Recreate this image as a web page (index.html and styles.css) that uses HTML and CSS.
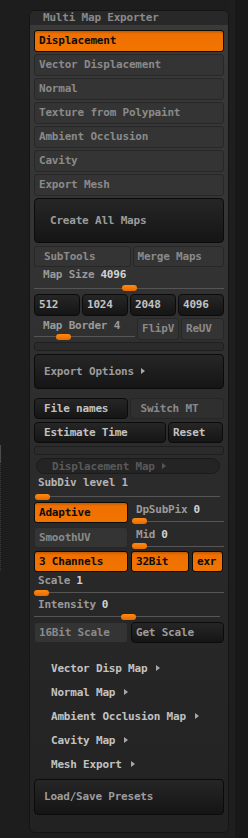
FILE: index.html
```html
<html lang="en">
<head>
    <meta charset="UTF-8">
    <meta name="viewport" content="width=device-width, initial-scale=1.0">
    <title>Multi Map Exporter</title>
    <link rel="stylesheet" href="styles.css">
</head>
<body>
    <div class="gutter">
        <div class="scroll-mark"><div class="scroll-thumb"></div></div>
    </div>

    <div class="panel">
        <div class="panel-head">Multi Map Exporter</div>
        <div class="panel-body">
            <div class="map-list">
                <div class="btn on">Displacement</div>
                <div class="btn off">Vector Displacement</div>
                <div class="btn off">Normal</div>
                <div class="btn off">Texture from Polypaint</div>
                <div class="btn off">Ambient Occlusion</div>
                <div class="btn off">Cavity</div>
                <div class="btn off">Export Mesh</div>
            </div>

            <div class="btn dark create-btn">Create All Maps</div>

            <div class="row row-sub">
                <div class="btn off wide-pad grow">SubTools</div>
                <div class="btn off grow">Merge Maps</div>
            </div>

            <div class="slider slider-size">
                <div class="slider-label">Map Size <b>4096</b></div>
                <div class="track"><span class="knob" style="left: 88px"></span></div>
            </div>

            <div class="row row-sizes">
                <div class="btn dark light grow">512</div>
                <div class="btn dark light grow">1024</div>
                <div class="btn dark light grow">2048</div>
                <div class="btn dark light grow">4096</div>
            </div>

            <div class="row row-border">
                <div class="slider slider-border">
                    <div class="slider-label">Map Border 4</div>
                    <div class="track"><span class="knob" style="left: 22px"></span></div>
                </div>
                <div class="btn off flip-btn">FlipV</div>
                <div class="btn off reuv-btn">ReUV</div>
            </div>

            <div class="empty-bar bar-one"></div>

            <div class="btn dark export-btn">Export Options <span class="arrow"></span></div>

            <div class="row row-files">
                <div class="btn dark light wide-pad grow">File names</div>
                <div class="btn off switch-btn grow">Switch MT</div>
            </div>

            <div class="row row-time">
                <div class="btn dark light wide-pad time-btn">Estimate Time</div>
                <div class="btn dark light reset-btn">Reset</div>
            </div>

            <div class="empty-bar bar-two"></div>

            <div class="sub-pill">Displacement Map <span class="arrow dim"></span></div>

            <div class="slider slider-subdiv">
                <div class="slider-label bright">SubDiv level 1</div>
                <div class="track"><span class="knob" style="left: 0px"></span></div>
            </div>

            <div class="row row-adaptive">
                <div class="btn on half-btn">Adaptive</div>
                <div class="slider side-slider">
                    <div class="slider-label">DpSubPix <b>0</b></div>
                    <div class="track"><span class="knob" style="left: 0px"></span></div>
                </div>
            </div>

            <div class="row row-smooth">
                <div class="btn off half-btn">SmoothUV</div>
                <div class="slider side-slider">
                    <div class="slider-label">Mid <b>0</b></div>
                    <div class="track"><span class="knob" style="left: 0px"></span></div>
                </div>
            </div>

            <div class="row row-channels">
                <div class="btn on half-btn">3 Channels</div>
                <div class="btn on bit-btn">32Bit</div>
                <div class="btn on exr-btn">exr</div>
            </div>

            <div class="slider slider-scale">
                <div class="slider-label">Scale <b>1</b></div>
                <div class="track"><span class="knob" style="left: 0px"></span></div>
            </div>

            <div class="slider slider-intensity">
                <div class="slider-label">Intensity <b>0</b></div>
                <div class="track"><span class="knob" style="left: 87px"></span></div>
            </div>

            <div class="row row-bit">
                <div class="btn off half-btn">16Bit Scale</div>
                <div class="btn dark grow">Get Scale</div>
            </div>

            <div class="sub-list">
                <div class="sub-item">Vector Disp Map <span class="arrow"></span></div>
                <div class="sub-item">Normal Map <span class="arrow"></span></div>
                <div class="sub-item">Ambient Occlusion Map <span class="arrow"></span></div>
                <div class="sub-item">Cavity Map <span class="arrow"></span></div>
                <div class="sub-item">Mesh Export <span class="arrow"></span></div>
            </div>

            <div class="btn dark presets-btn">Load/Save Presets</div>
        </div>
    </div>

    <div class="edge"></div>
</body>
</html>
```

FILE: styles.css
```css
* {
    box-sizing: border-box;
}
body {
    margin: 0;
    height: 838px;
    overflow: hidden;
    display: flex;
    background-color: #1d1d1d;
    font-family: "DejaVu Sans Mono", monospace;
    font-weight: bold;
    font-size: 11px;
    letter-spacing: -0.2px;
    color: #8c8c8c;
}
b {
    color: #d2d2d2;
}

/* left gutter with the small scroll marker */
.gutter {
    width: 29px;
    flex-shrink: 0;
}
.scroll-mark {
    width: 1px;
    height: 126px;
    margin-top: 445px;
    border-left: 1px dotted #3a3a3a;
}
.scroll-thumb {
    width: 1px;
    height: 18px;
    margin-top: 52px;
    margin-left: -1px;
    background-color: #4a4a4a;
}
.edge {
    flex: 1;
    background: linear-gradient(to right, #1e1e1e 6px, #181818 6px);
}

/* panel */
.panel {
    width: 200px;
    height: 823px;
    margin-top: 10px;
    flex-shrink: 0;
    display: flex;
    flex-direction: column;
    border: 1px solid #151515;
    border-radius: 6px;
    background: linear-gradient(#3a3a3a, #333 30%, #2b2b2b 55%, #222);
}
.panel-head {
    height: 14px;
    flex-shrink: 0;
    padding-left: 13px;
    line-height: 14px;
    color: #8a8a8a;
    background-color: #282828;
    border-radius: 5px 5px 0 0;
}
.panel-body {
    flex-shrink: 0;
    display: flex;
    flex-direction: column;
    padding: 0 4px;
}
.panel-body > * {
    flex-shrink: 0;
}

/* buttons */
.btn {
    height: 21px;
    flex-shrink: 0;
    display: flex;
    align-items: center;
    padding: 0 4px 1px;
    border-radius: 3px;
    white-space: nowrap;
}
.btn.on {
    color: #0c0c0c;
    background: linear-gradient(#c45a00, #ef7000 3px, #f27400);
    border: 1px solid #0e0a06;
}
.btn.off {
    color: #8a8a8a;
    background-color: #343434;
    border: 1px solid #272727;
}
.btn.dark {
    color: #9c9c9c;
    background: linear-gradient(#262626, #151515);
    border: 1px solid #0b0b0b;
    border-radius: 4px;
}
.btn.light {
    color: #c2c2c2;
}
.wide-pad {
    padding-left: 9px;
}
.grow {
    flex: 1;
}
.row {
    display: flex;
    gap: 2px;
}

.map-list {
    display: flex;
    flex-direction: column;
    gap: 2px;
    margin-top: 5px;
}
.map-list .btn {
    height: 22px;
}
.create-btn {
    height: 45px;
    margin-top: 2px;
    padding-left: 15px;
}
.row-sub {
    margin-top: 3px;
    height: 21px;
}

/* sliders */
.slider {
    display: flex;
    flex-direction: column;
}
.slider-label {
    display: flex;
    align-items: center;
    gap: 6px;
    flex-shrink: 0;
    padding-left: 9px;
    color: #9a9a9a;
}
.slider-label.bright {
    color: #b4b4b4;
}
.track {
    position: relative;
    flex: 1;
}
.track::before {
    content: "";
    position: absolute;
    left: 0;
    right: 0;
    top: 6px;
    height: 1px;
    background-color: #555;
}
.knob {
    position: absolute;
    top: 3px;
    width: 15px;
    height: 6px;
    border-radius: 3px;
    background: linear-gradient(#ff8a10, #e86a00);
}

.slider-size {
    height: 27px;
}
.slider-size .slider-label {
    height: 15px;
}
.row-sizes {
    height: 22px;
}
.row-sizes .btn {
    height: 22px;
}

.row-border {
    margin-top: 2px;
    height: 22px;
}
.slider-border {
    width: 101px;
}
.slider-border .slider-label {
    height: 14px;
    padding-top: 1px;
}
.slider-border .track::before {
    top: 4px;
}
.slider-border .knob {
    top: 2px;
}
.flip-btn {
    width: 42px;
    height: 22px;
}
.reuv-btn {
    width: 43px;
    height: 22px;
}

.empty-bar {
    height: 9px;
    margin-top: 2px;
    background-color: #2b2b2b;
    border: 1px solid #1f1f1f;
    border-radius: 3px;
}
.bar-two {
    margin-top: 3px;
}
.export-btn {
    height: 35px;
    margin-top: 3px;
    padding-left: 9px;
    color: #b0b0b0;
}
.arrow {
    width: 0;
    height: 0;
    margin-left: 7px;
    border-top: 3px solid transparent;
    border-bottom: 3px solid transparent;
    border-left: 4px solid #a8a8a8;
}
.arrow.dim {
    border-left-color: #555;
}

.row-files {
    margin-top: 9px;
    height: 21px;
}
.switch-btn {
    padding-left: 10px;
    background-color: #2f2f2f !important;
    border-color: #262626 !important;
}
.row-time {
    margin-top: 3px;
    height: 21px;
}
.time-btn {
    width: 132px;
}
.reset-btn {
    width: 55px;
}

.sub-pill {
    height: 16px;
    margin: 3px 4px 0 2px;
    display: flex;
    align-items: center;
    padding-left: 15px;
    color: #595959;
    background-color: #242424;
    border: 1px solid #1b1b1b;
    border-radius: 8px;
}

/* lower section */
.slider-subdiv .slider-label,
.slider-scale .slider-label,
.slider-intensity .slider-label {
    padding-left: 4px;
}
.slider-subdiv {
    height: 27px;
}
.slider-subdiv .slider-label {
    height: 17px;
}
.slider-subdiv .track {
    margin: 0 4px 0 1px;
}
.slider-subdiv .track::before {
    top: 5px;
}

.row-adaptive {
    margin-top: 1px;
    height: 21px;
}
.row-smooth {
    margin-top: 4px;
    height: 21px;
}
.half-btn {
    width: 94px;
}
.side-slider {
    flex: 1;
    margin-left: 2px;
}
.side-slider .slider-label {
    height: 14px;
    padding-left: 4px;
    padding-top: 1px;
}
.side-slider .track::before {
    top: 5px;
}
.side-slider .knob {
    top: 2px;
}

.row-channels {
    margin-top: 3px;
    height: 21px;
    gap: 3px;
}
.bit-btn {
    width: 58px;
}
.exr-btn {
    width: 31px;
}

.slider-scale {
    height: 25px;
}
.slider-scale .slider-label {
    height: 16px;
}
.slider-scale .track::before {
    top: 4px;
}
.slider-scale .knob {
    top: 2px;
}
.slider-intensity {
    height: 24px;
}
.slider-intensity .slider-label {
    height: 14px;
}
.slider-intensity .track {
    margin-right: 4px;
}
.slider-intensity .track::before {
    top: 5px;
}

.row-bit {
    margin-top: 1px;
    height: 21px;
    gap: 3px;
}

.sub-list {
    display: flex;
    flex-direction: column;
    margin-top: 13px;
}
.sub-item {
    height: 24px;
    display: flex;
    align-items: center;
    padding-left: 17px;
    color: #c2c2c2;
}
.sub-item .arrow {
    margin-left: 9px;
}

.presets-btn {
    height: 36px;
    margin-top: 3px;
    padding-left: 9px;
}
```
